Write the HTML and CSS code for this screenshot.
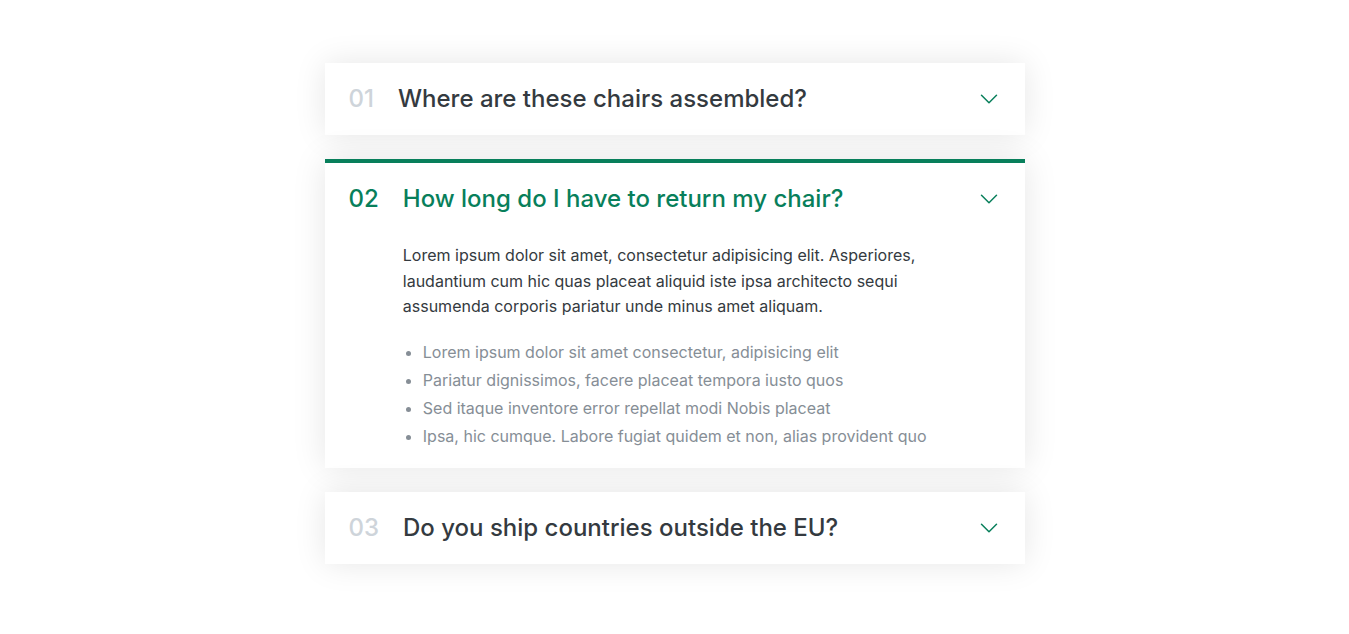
FILE: index.html
```html
<!DOCTYPE html>
<html lang="en">
<head>
<meta charset="utf-8">
<title>Accordion</title>
<link rel="stylesheet" href="styles.css">
</head>
<body>
<div class="accordion">
  <div class="item">
    <p class="number">01</p>
    <p class="text">Where are these chairs assembled?</p>
    <svg class="icon" xmlns="http://www.w3.org/2000/svg" fill="none" viewBox="0 0 24 24" stroke-width="1.5"><path stroke-linecap="round" stroke-linejoin="round" d="M19.5 8.25l-7.5 7.5-7.5-7.5"/></svg>
  </div>
  <div class="item open">
    <p class="number">02</p>
    <p class="text">How long do I have to return my chair?</p>
    <svg class="icon" xmlns="http://www.w3.org/2000/svg" fill="none" viewBox="0 0 24 24" stroke-width="1.5"><path stroke-linecap="round" stroke-linejoin="round" d="M19.5 8.25l-7.5 7.5-7.5-7.5"/></svg>
    <div class="hidden-box">
      <p>Lorem ipsum dolor sit amet, consectetur adipisicing elit. Asperiores, laudantium cum hic quas placeat aliquid iste ipsa architecto sequi assumenda corporis pariatur unde minus amet aliquam.</p>
      <ul>
        <li>Lorem ipsum dolor sit amet consectetur, adipisicing elit</li>
        <li>Pariatur dignissimos, facere placeat tempora iusto quos</li>
        <li>Sed itaque inventore error repellat modi Nobis placeat</li>
        <li>Ipsa, hic cumque. Labore fugiat quidem et non, alias provident quo</li>
      </ul>
    </div>
  </div>
  <div class="item">
    <p class="number">03</p>
    <p class="text">Do you ship countries outside the EU?</p>
    <svg class="icon" xmlns="http://www.w3.org/2000/svg" fill="none" viewBox="0 0 24 24" stroke-width="1.5"><path stroke-linecap="round" stroke-linejoin="round" d="M19.5 8.25l-7.5 7.5-7.5-7.5"/></svg>
  </div>
</div>
</body>
</html>
```
FILE: styles.css
```css
* {
  margin: 0;
  padding: 0;
  box-sizing: border-box;
}

body {
  font-family: "Inter", "Noto Sans", sans-serif;
  color: #343a40;
  line-height: 1;
  background: #fff;
}

.accordion {
  width: 700px;
  margin: 63px auto;
  display: flex;
  flex-direction: column;
  gap: 24px;
}

.item {
  box-shadow: 0 0 32px rgba(0, 0, 0, 0.1);
  padding: 24px;
  display: grid;
  grid-template-columns: auto 1fr auto;
  column-gap: 24px;
  row-gap: 32px;
  align-items: center;
  background: #fff;
}

.number,
.text {
  font-size: 24px;
  font-weight: 500;
}

.number {
  color: #ced4da;
}

.icon {
  width: 24px;
  height: 24px;
  stroke: #087f5b;
}

.hidden-box {
  grid-column: 2;
}

.hidden-box p {
  font-size: 16px;
  line-height: 1.6;
  margin-bottom: 24px;
}

.hidden-box ul {
  color: #868e96;
  margin-left: 20px;
  display: flex;
  flex-direction: column;
  gap: 12px;
  font-size: 16px;
}

.open {
  border-top: 4px solid #087f5b;
}

.open .number,
.open .text {
  color: #087f5b;
}
```
